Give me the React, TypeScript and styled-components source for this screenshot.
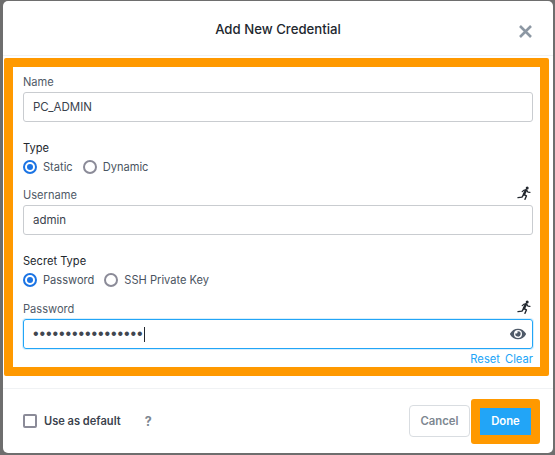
import styled, { createGlobalStyle } from 'styled-components';
import { FaEye } from 'react-icons/fa';

const GlobalStyle = createGlobalStyle`
  html, body {
    margin: 0;
    padding: 0;
    background: #6e6e6e;
  }
  * {
    box-sizing: border-box;
  }
`;

const Backdrop = styled.div`
  width: 555px;
  height: 455px;
  padding: 1px 2px 2px 3px;
  background: #6e6e6e;
  font-family: Inter, Lato, sans-serif;
  overflow: hidden;
`;

const Modal = styled.div`
  height: 452px;
  background: #fff;
  border-radius: 5px;
  display: flex;
  flex-direction: column;
`;

const Header = styled.div`
  height: 55px;
  display: grid;
  grid-template-columns: 1fr auto 1fr;
  align-items: center;
  border-bottom: 1px solid #f0f2f4;
  padding-top: 2px;
`;

const Title = styled.div`
  grid-column: 2;
  font-size: 13.2px;
  font-weight: 500;
  color: #22272e;
`;

const CloseIcon = styled.svg`
  grid-column: 3;
  justify-self: end;
  width: 13px;
  height: 13px;
  margin: 5px 21px 0 0;
`;

const FormSection = styled.div`
  margin: 2px 4px 0 1px;
  border: 9px solid #ff9900;
  border-radius: 2px;
  padding: 5px 7px 0 10px;
  height: 318px;
`;

const LabelRow = styled.div<{ $top?: number }>`
  display: flex;
  justify-content: space-between;
  align-items: center;
  height: 18px;
  margin-top: ${(p) => p.$top || 0}px;
  margin-bottom: 2px;
`;

const Label = styled.label`
  font-size: 11.1px;
  padding-top: 1px;
  color: #4f5a68;
`;

const DarkLabel = styled(Label)`
  color: #22272e;
`;

const RunIconSvg = styled.svg`
  width: 14px;
  height: 14px;
  margin: -3px 2px 0 0;
  fill: none;
  stroke: #22272e;
  stroke-linecap: round;
  stroke-linejoin: round;
`;

const RunIcon = () => (
  <RunIconSvg viewBox="0 0 14 14">
    <circle cx="10.2" cy="1.9" r="1.5" fill="#22272e" stroke="none" />
    <path d="M9 4.3L6.9 8.4" strokeWidth="2.4" />
    <path d="M5.2 5.6L7 4.2H9.6L11 6.2L13 6.3" strokeWidth="1.2" />
    <path d="M6.9 8.4L9.4 9.9L8 13.3" strokeWidth="1.4" />
    <path d="M6.6 8.6L5 11.1L1 11.6" strokeWidth="1.4" />
  </RunIconSvg>
);

const InputBox = styled.div<{ $focused?: boolean }>`
  height: 30px;
  border: 1px solid ${(p) => (p.$focused ? '#22a5f7' : '#c9ccd0')};
  border-radius: 3px;
  padding: 0 9px;
  display: flex;
  align-items: center;
  justify-content: space-between;
  font-size: 11.5px;
  color: #3a424d;
  box-shadow: ${(p) => (p.$focused ? '0 0 0 1px #d8f0fd' : 'none')};
`;

const Dots = styled.span`
  display: flex;
  align-items: center;
  font-family: 'Liberation Sans', sans-serif;
  font-size: 16px;
  letter-spacing: 0.9px;
  color: #3f4650;
`;

const Caret = styled.span`
  display: inline-block;
  width: 1px;
  height: 15px;
  background: #22272e;
`;

const EyeIcon = styled(FaEye)`
  width: 16px;
  height: 16px;
  color: #4f5a68;
  margin-right: -3px;
`;

const RadioRow = styled.div`
  display: flex;
  align-items: center;
  height: 14px;
  margin-top: 4px;
  gap: 10px;
`;

const RadioOption = styled.span`
  display: flex;
  align-items: center;
  gap: 6px;
  font-size: 11.1px;
  color: #4a5461;
`;

const RadioCircle = styled.span<{ $checked?: boolean }>`
  width: 14px;
  height: 14px;
  border-radius: 50%;
  border: ${(p) => (p.$checked ? '2px solid #1b74e4' : '2px solid #8b8b98')};
  display: flex;
  align-items: center;
  justify-content: center;
  &::after {
    content: '';
    width: 6px;
    height: 6px;
    border-radius: 50%;
    background: ${(p) => (p.$checked ? '#1b74e4' : 'transparent')};
  }
`;

const LinkRow = styled.div`
  display: flex;
  justify-content: flex-end;
  gap: 5px;
  height: 16px;
  line-height: 16px;
  margin-top: 2px;
`;

const TextLink = styled.a`
  font-size: 11.2px;
  color: #22a5f7;
`;

const Footer = styled.div`
  margin-top: 12px;
  border-top: 1px solid #f0f2f4;
  flex: 1;
  display: flex;
  align-items: center;
  justify-content: space-between;
  padding: 0 13px 0 20px;
`;

const DefaultOption = styled.div`
  display: flex;
  align-items: center;
`;

const Checkbox = styled.span`
  width: 14px;
  height: 14px;
  border: 2px solid #8b8b98;
  border-radius: 2px;
`;

const CheckLabel = styled.span`
  margin-left: 7px;
  font-size: 11.1px;
  font-weight: 600;
  color: #3a424d;
`;

const Help = styled.span`
  margin-left: 24px;
  font-size: 12.5px;
  font-weight: 700;
  color: #7d8791;
`;

const Actions = styled.div`
  display: flex;
  align-items: center;
  gap: 1px;
`;

const CancelButton = styled.button`
  width: 61px;
  height: 32px;
  border: 1px solid #d9dde1;
  border-radius: 4px;
  background: #fff;
  font-family: inherit;
  font-size: 11.3px;
  font-weight: 600;
  color: #7d8791;
  padding: 0;
`;

const DoneButton = styled.button`
  width: 69px;
  height: 45px;
  border: 9px solid #ff9900;
  border-radius: 3px;
  background: #22a5f7;
  font-family: inherit;
  font-size: 11.3px;
  font-weight: 600;
  color: #fff;
  padding: 0;
`;

const App = () => {
  return (
    <Backdrop>
      <GlobalStyle />
      <Modal>
        <Header>
          <Title>Add New Credential</Title>
          <CloseIcon viewBox="0 0 13 13">
            <path d="M1 1L12 12M12 1L1 12" stroke="#8c97a3" strokeWidth="2.6" />
          </CloseIcon>
        </Header>
        <FormSection>
          <LabelRow>
            <Label>Name</Label>
          </LabelRow>
          <InputBox>PC_ADMIN</InputBox>
          <LabelRow $top={16}>
            <DarkLabel>Type</DarkLabel>
          </LabelRow>
          <RadioRow>
            <RadioOption>
              <RadioCircle $checked />
              Static
            </RadioOption>
            <RadioOption>
              <RadioCircle />
              Dynamic
            </RadioOption>
          </RadioRow>
          <LabelRow $top={11}>
            <Label>Username</Label>
            <RunIcon />
          </LabelRow>
          <InputBox>admin</InputBox>
          <LabelRow $top={16}>
            <DarkLabel>Secret Type</DarkLabel>
          </LabelRow>
          <RadioRow>
            <RadioOption>
              <RadioCircle $checked />
              Password
            </RadioOption>
            <RadioOption>
              <RadioCircle />
              SSH Private Key
            </RadioOption>
          </RadioRow>
          <LabelRow $top={12}>
            <Label>Password</Label>
            <RunIcon />
          </LabelRow>
          <InputBox $focused>
            <Dots>
              {'•'.repeat(17)}
              <Caret />
            </Dots>
            <EyeIcon />
          </InputBox>
          <LinkRow>
            <TextLink>Reset</TextLink>
            <TextLink>Clear</TextLink>
          </LinkRow>
        </FormSection>
        <Footer>
          <DefaultOption>
            <Checkbox />
            <CheckLabel>Use as default</CheckLabel>
            <Help>?</Help>
          </DefaultOption>
          <Actions>
            <CancelButton>Cancel</CancelButton>
            <DoneButton>Done</DoneButton>
          </Actions>
        </Footer>
      </Modal>
    </Backdrop>
  );
};

export default App;
